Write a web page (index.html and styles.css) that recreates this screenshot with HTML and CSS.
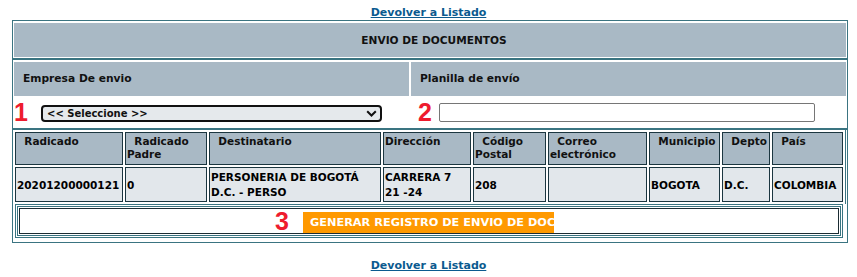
FILE: index.html
```html
<!DOCTYPE html>
<html lang="es">
<head>
  <meta charset="UTF-8">
  <meta name="viewport" content="width=device-width, initial-scale=1.0">
  <title>Envio de documentos</title>
  <link rel="stylesheet" href="styles.css">
</head>
<body>

  <div class="back-link top"><a href="#">Devolver a Listado</a></div>

  <div class="frame">
    <div class="title">ENVIO DE DOCUMENTOS</div>

    <div class="form-box">
      <div class="form-grid">
        <div class="label">Empresa De envio</div>
        <div class="label">Planilla de envío</div>
        <div class="field">
          <span class="step">1</span>
          <div class="select-wrap">
            <select id="empresa" class="select">
              <option>&lt;&lt; Seleccione &gt;&gt;</option>
            </select>
            <svg class="chevron" width="11" height="7" viewBox="0 0 11 7"><path d="M1.2 1.2l4.3 4.3 4.3-4.3" fill="none" stroke="#111" stroke-width="2"/></svg>
          </div>
        </div>
        <div class="field">
          <span class="step step-2">2</span>
          <input type="text" id="planilla" class="planilla">
        </div>
      </div>
    </div>

    <table class="data">
      <tr>
        <th class="c-rad">&nbsp;&nbsp;Radicado</th>
        <th class="c-padre">&nbsp;&nbsp;Radicado Padre</th>
        <th class="c-dest">&nbsp;&nbsp;Destinatario</th>
        <th class="c-dir">Dirección</th>
        <th class="c-cod">&nbsp;&nbsp;Código Postal</th>
        <th class="c-mail">&nbsp;&nbsp;Correo electrónico</th>
        <th class="c-mun">&nbsp;&nbsp;Municipio</th>
        <th class="c-dep">&nbsp;&nbsp;Depto</th>
        <th class="c-pais">&nbsp;&nbsp;País</th>
      </tr>
      <tr>
        <td>20201200000121</td>
        <td>0</td>
        <td>PERSONERIA DE BOGOTÁ D.C. - PERSO</td>
        <td>CARRERA 7 21 -24</td>
        <td>208</td>
        <td></td>
        <td>BOGOTA</td>
        <td>D.C.</td>
        <td>COLOMBIA</td>
      </tr>
    </table>

    <div class="actions">
      <div class="actions-cell">
        <div class="actions-inner">
          <span class="step">3</span>
          <button type="button" class="btn-generar">GENERAR REGISTRO DE ENVIO DE DOCUMENTOS</button>
        </div>
      </div>
    </div>
  </div>

  <div class="back-link bottom"><a href="#">Devolver a Listado</a></div>

</body>
</html>
```

FILE: styles.css
```css
body {
  margin: 0;
  font-family: "DejaVu Sans", Verdana, sans-serif;
  color: #111;
  background-color: #fff;
}
.back-link {
  height: 14px;
  line-height: 14px;
  text-align: center;
  font-size: 11px;
  font-weight: bold;
}
.back-link.top { padding-top: 6px; }
.back-link.bottom { margin-top: 16px; }
.back-link a {
  color: #0b5a8f;
}
.frame {
  box-sizing: border-box;
  width: 836px;
  margin-left: 12px;
  border: 1px solid #3a7481;
  padding: 2px 0 4px;
}
.title {
  box-sizing: border-box;
  margin: 0 1px;
  height: 34px;
  line-height: 34px;
  padding-left: 8px;
  background-color: #a9b9c5;
  text-align: center;
  font-size: 10.6px;
  font-weight: bold;
}
.form-box {
  margin-top: 1px;
  border-top: 2px solid #3a7481;
  border-bottom: 2px solid #3a7481;
  padding: 2px 1px 0;
}
.form-grid {
  display: grid;
  grid-template-columns: 395px 1fr;
  column-gap: 2px;
}
.label {
  height: 34px;
  line-height: 34px;
  padding-left: 9px;
  background-color: #a9b9c5;
  font-size: 10.7px;
  font-weight: bold;
}
.field {
  display: flex;
  align-items: center;
  height: 32px;
}
.step {
  width: 27px;
  flex: none;
  font-family: "Liberation Sans", Arial, sans-serif;
  font-size: 25px;
  font-weight: bold;
  line-height: 24px;
  color: #ee1c2e;
}
.step-2 {
  width: 21px;
  padding-left: 7px;
}
.select-wrap {
  position: relative;
  display: flex;
}
.select {
  appearance: none;
  box-sizing: border-box;
  width: 341px;
  height: 17px;
  margin: 2px 0 0;
  padding: 0 0 0 4px;
  border: 2px solid #111;
  border-radius: 4px;
  background-color: #e5e9ec;
  color: #111;
  font-family: "DejaVu Sans", Verdana, sans-serif;
  font-size: 10px;
  font-weight: bold;
  line-height: 13px;
}
.chevron {
  position: absolute;
  right: 5px;
  top: 7px;
}
.planilla {
  box-sizing: border-box;
  width: 376px;
  height: 19px;
  margin: 0;
  padding: 0 3px;
  border: 1px solid #767676;
  border-radius: 2px;
}
.data {
  width: 833px;
  table-layout: fixed;
  border-collapse: separate;
  border-spacing: 2px;
  border-right: 1px solid #3a7481;
}
.data th, .data td {
  box-sizing: border-box;
  border: 1px solid #1b3640;
  padding: 2px 1px 1px;
  text-align: left;
}
.data th {
  height: 33px;
  background-color: #a9b9c5;
  vertical-align: top;
  font-size: 10.5px;
  line-height: 13px;
  font-weight: bold;
}
.data td {
  height: 34px;
  background-color: #e2e7eb;
  vertical-align: middle;
  font-size: 10.5px;
  line-height: 15px;
  font-weight: bold;
  color: #000;
}
.c-rad { width: 108px; }
.c-padre { width: 82px; }
.c-dest { width: 172px; }
.c-dir { width: 88px; }
.c-cod { width: 73px; }
.c-mail { width: 99px; }
.c-mun { width: 71px; }
.c-dep { width: 48px; }
.c-pais { width: 71px; }
.actions {
  margin: 0 4px 0 2px;
  border: 1px solid #3a7481;
  padding: 1px;
}
.actions-cell {
  border: 1px solid #3a7481;
  padding: 1px;
}
.actions-inner {
  display: flex;
  align-items: center;
  height: 24px;
  padding-left: 255px;
  border: 1px solid #1b2c33;
}
.actions-inner .step {
  width: 28px;
}
.btn-generar {
  box-sizing: border-box;
  width: 251px;
  height: 21px;
  margin-top: 2px;
  padding: 0 0 0 7px;
  overflow: hidden;
  white-space: nowrap;
  text-align: left;
  border: none;
  background-color: #ff9900;
  color: #fff;
  font-family: "DejaVu Sans", Verdana, sans-serif;
  font-size: 11.3px;
  font-weight: bold;
}
```
